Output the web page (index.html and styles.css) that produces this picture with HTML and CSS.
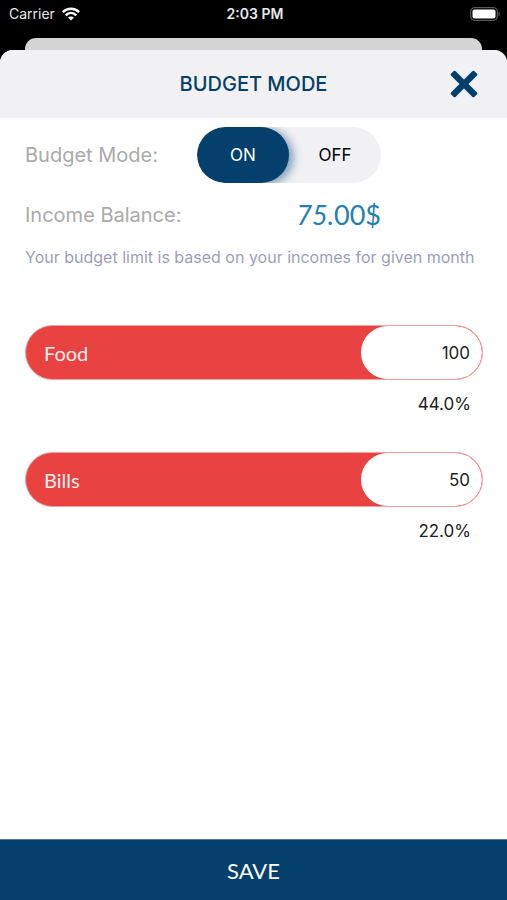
FILE: index.html
```html
<!DOCTYPE html>
<html lang="en">
<head>
<meta charset="utf-8">
<meta name="viewport" content="width=device-width, initial-scale=1">
<title>Budget Mode</title>
<link rel="stylesheet" href="styles.css">
</head>
<body>
<div class="status">
  <div class="carrier">
    <span>Carrier</span>
    <svg width="18" height="14" viewBox="0 0 18 14" aria-hidden="true">
      <g fill="none" stroke="#fff" stroke-width="2.5">
        <path d="M0.9 5.1C5.4 0.7 12.6 0.7 17.1 5.1"/>
        <path d="M3.7 8.3C6.8 5.3 11.2 5.3 14.3 8.3"/>
      </g>
      <path d="M6 10.6C7.7 9 10.3 9 12 10.6L9 13.6Z" fill="#fff"/>
    </svg>
  </div>
  <span class="time">2:03 PM</span>
  <svg class="battery" width="31" height="14" viewBox="0 0 31 14" aria-hidden="true">
    <rect x="0.7" y="0.7" width="26.6" height="12.6" rx="4" fill="none" stroke="#58585a" stroke-width="1.2"/>
    <rect x="2.5" y="2.5" width="23" height="9" rx="2" fill="#fff"/>
    <path d="M28.5 4.8C30.3 5.3 30.3 8.7 28.5 9.2Z" fill="#58585a"/>
  </svg>
</div>
<div class="back-sheet"></div>
<form class="sheet">
  <header class="header">
    <h1>BUDGET MODE</h1>
    <button type="button" class="close" aria-label="Close">
      <svg width="28" height="28" viewBox="0 0 28 28" aria-hidden="true">
        <g fill="#04406b">
          <rect x="-2.5" y="10.8" width="33" height="6.4" rx="1.6" transform="rotate(45 14 14)"/>
          <rect x="-2.5" y="10.8" width="33" height="6.4" rx="1.6" transform="rotate(-45 14 14)"/>
        </g>
      </svg>
    </button>
  </header>
  <main class="content">
    <div class="settings">
      <span class="label" id="mode">Budget Mode:</span>
      <div class="toggle" role="radiogroup" aria-labelledby="mode">
        <label><input type="radio" name="mode" checked><span>ON</span></label>
        <label><input type="radio" name="mode"><span>OFF</span></label>
      </div>
      <span class="label">Income Balance:</span>
      <output class="balance"><i>75.</i>00$</output>
    </div>
    <p class="note">Your budget limit is based on your incomes for given month</p>
    <div class="limit">
      <div class="bar">
        <label for="food">Food</label>
        <input id="food" type="text" inputmode="numeric" value="100">
      </div>
      <p class="percent">44.0%</p>
    </div>
    <div class="limit">
      <div class="bar">
        <label for="bills">Bills</label>
        <input id="bills" type="text" inputmode="numeric" value="50">
      </div>
      <p class="percent">22.0%</p>
    </div>
  </main>
  <button type="submit" class="save">SAVE</button>
</form>
</body>
</html>
```
FILE: styles.css
```css
* {
  box-sizing: border-box;
}

body {
  margin: 0;
  min-height: 100vh;
  display: flex;
  flex-direction: column;
  background: #000;
  color: #000;
  font-family: Inter, "Liberation Sans", sans-serif;
}

h1,
p {
  margin: 0;
}

button,
input {
  font: inherit;
  border: 0;
  padding: 0;
}

svg {
  display: block;
}

.status {
  display: grid;
  grid-template-columns: 1fr auto 1fr;
  align-items: center;
  padding: 4px 6px 4px 9px;
  margin-bottom: 10px;
  color: #e8e8e8;
  font-size: 14px;
  line-height: 20px;
}

.carrier {
  display: flex;
  align-items: center;
  gap: 7px;
}

.time {
  font-weight: 600;
}

.battery {
  justify-self: end;
}

.back-sheet {
  height: 24px;
  margin: 0 25px -12px;
  border-radius: 11px 11px 0 0;
  background: #d4d4d5;
}

.sheet {
  position: relative;
  flex: 1;
  display: flex;
  flex-direction: column;
  overflow: hidden;
  border-radius: 13px 13px 0 0;
  background: #fff;
}

.header {
  display: grid;
  grid-template-columns: 1fr auto 1fr;
  align-items: center;
  height: 68px;
  padding: 0 29px;
  background: #f1f1f4;
  color: #04406b;
}

.header h1 {
  grid-column: 2;
  font-size: 20px;
  line-height: 24px;
  font-weight: 500;
}

.close {
  justify-self: end;
  background: none;
}

.content {
  flex: 1;
  padding: 9px 24px 24px 25px;
}

.settings {
  display: grid;
  grid-template-columns: 172px 184px;
  grid-template-rows: 56px 64px;
  align-items: center;
}

.label {
  color: #aaa;
  font-size: 20px;
  line-height: 24px;
}

.toggle {
  display: flex;
  height: 56px;
  overflow: hidden;
  border-radius: 28px;
  background: #f1f1f4;
  font-size: 17px;
}

.toggle label {
  position: relative;
  flex: 1;
}

.toggle input {
  position: absolute;
  opacity: 0;
}

.toggle span {
  display: flex;
  align-items: center;
  justify-content: center;
  height: 100%;
  border-radius: 28px;
}

.toggle input:checked + span {
  background: #04406b;
  color: #fff;
  box-shadow: 4px 2px 10px #04406b80;
}

.balance {
  justify-self: end;
  color: #2380b2;
  font-family: Lato, sans-serif;
  font-size: 27px;
  line-height: 32px;
}

.note {
  margin-bottom: 58px;
  color: #9a9fb9;
  font-size: 16px;
  line-height: 20px;
}

.limit {
  margin-bottom: 36px;
}

.bar {
  display: flex;
  align-items: stretch;
  height: 55px;
  border: 1px solid #f2a0a1;
  border-radius: 28px;
  overflow: hidden;
  background: #e84241;
}

.bar label {
  flex: 1;
  align-self: center;
  padding-left: 18px;
  color: #fff0ef;
  font-family: Lato, sans-serif;
  font-size: 20px;
  line-height: 24px;
}

.bar input {
  width: 121px;
  padding-right: 12px;
  border-radius: 27px;
  background: #fff;
  color: #222;
  font-size: 17px;
  text-align: right;
}

.percent {
  margin-top: 12px;
  padding-right: 12px;
  color: #222;
  font-size: 17px;
  line-height: 24px;
  text-align: right;
}

.save {
  height: 61px;
  border-top: 1px solid #4d7897;
  background: #04406b;
  color: #fff;
  font-family: Lato, sans-serif;
  font-size: 22px;
}
```
